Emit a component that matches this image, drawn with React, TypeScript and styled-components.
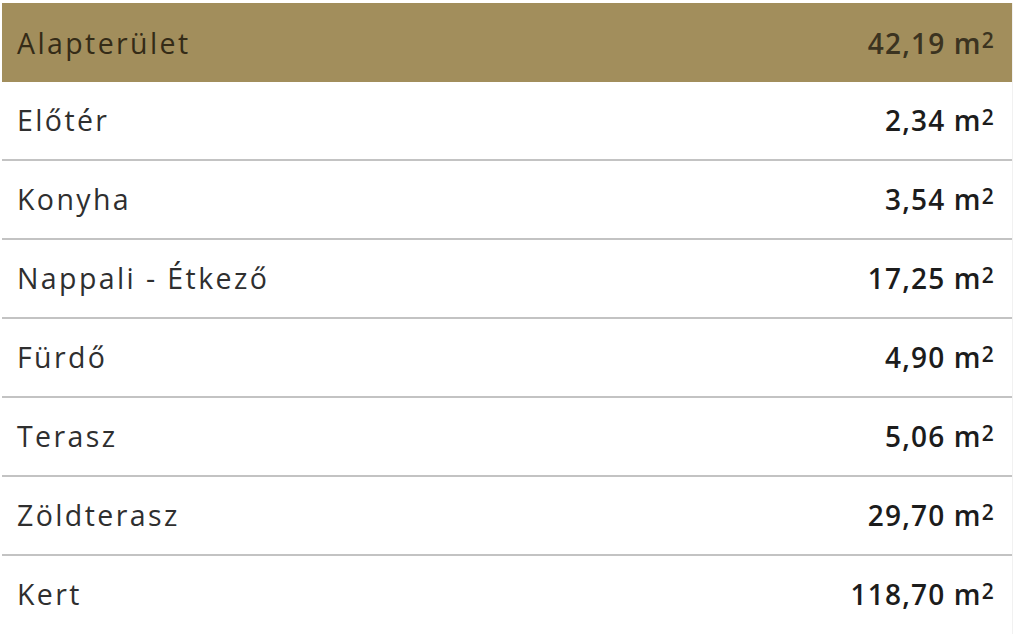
import * as React from 'react';
import styled, { createGlobalStyle } from 'styled-components';

const GlobalStyle = createGlobalStyle`
  html, body {
    margin: 0;
    padding: 0;
    background: #ffffff;
  }
  body {
    font-family: 'Open Sans', 'Noto Sans', 'Liberation Sans', sans-serif;
  }
`;

const Page = styled.div`
  width: 1024px;
  height: 634px;
  overflow: hidden;
  padding: 3px 0 0 2px;
  box-sizing: border-box;
  background: #ffffff;
`;

const Table = styled.div`
  width: 1010px;
  display: flex;
  flex-direction: column;
  border-right: 1px solid #f1f1f1;
`;

const Row = styled.div<{ $head?: boolean; $last?: boolean }>`
  height: 79px;
  box-sizing: border-box;
  display: flex;
  align-items: center;
  justify-content: space-between;
  padding: 0 17px 0 15px;
  background: ${(p) => (p.$head ? '#a28e5c' : '#ffffff')};
  border-bottom: ${(p) => (p.$head || p.$last ? 'none' : '2px solid #c3c3c3')};
  padding-bottom: ${(p) => (p.$head ? '0' : p.$last ? '4px' : '1px')};
`;

const Label = styled.span<{ $head?: boolean }>`
  font-size: 28.5px;
  font-weight: 400;
  letter-spacing: 2.4px;
  color: ${(p) => (p.$head ? '#342b17' : '#2f2f2f')};
`;

const Value = styled.span<{ $head?: boolean }>`
  font-size: 28px;
  font-weight: 600;
  letter-spacing: 1.2px;
  color: ${(p) => (p.$head ? '#3b3320' : '#1c1c1c')};
`;

const Sup = styled.span`
  font-size: 0.75em;
  vertical-align: 0.3em;
  line-height: 0;
`;

const rows = [
  { name: 'Előtér', area: '2,34' },
  { name: 'Konyha', area: '3,54' },
  { name: 'Nappali - Étkező', area: '17,25' },
  { name: 'Fürdő', area: '4,90' },
  { name: 'Terasz', area: '5,06' },
  { name: 'Zöldterasz', area: '29,70' },
  { name: 'Kert', area: '118,70' },
];

export default function App() {
  return (
    <>
      <GlobalStyle />
      <Page>
        <Table>
          <Row $head>
            <Label $head>Alapterület</Label>
            <Value $head>
              42,19 m<Sup>2</Sup>
            </Value>
          </Row>
          {rows.map((r, i) => (
            <Row key={r.name} $last={i === rows.length - 1}>
              <Label>{r.name}</Label>
              <Value>
                {r.area} m<Sup>2</Sup>
              </Value>
            </Row>
          ))}
        </Table>
      </Page>
    </>
  );
}
